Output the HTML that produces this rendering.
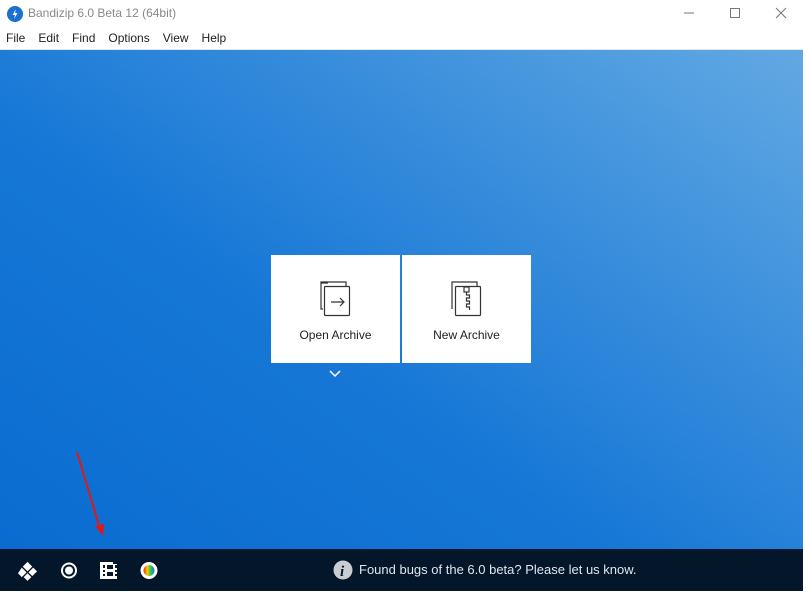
<!DOCTYPE html>
<html><head><style>
*{margin:0;padding:0;box-sizing:border-box}
body{width:806px;height:592px;background:#fff;font-family:"Segoe UI","Liberation Sans",sans-serif;position:relative;overflow:hidden}
.t{position:absolute;left:28px;top:6px;font-size:12px;color:#888}
.menu{position:absolute;left:6px;top:31px;font-size:12px;color:#222}
.menu span{margin-right:13px}
.main{position:absolute;left:0;top:49px;width:803px;height:500px;background:linear-gradient(215deg,#62a9e3 0%,#3b8fdc 30%,#1677d6 60%,#0a6cd0 100%);border-top:1px solid #e6e6e6}
.card{position:absolute;top:255px;width:129px;height:108px;background:#fff;text-align:center;font-size:12px;color:#222}
.card div{position:absolute;top:73px;width:100%}
.bar{position:absolute;left:0;top:549px;width:803px;height:42px;background:#04162a}
.msg{position:absolute;left:359px;top:562px;font-size:13px;color:#e0e6ee}
</style></head><body>
<svg style="position:absolute;left:7px;top:6px" width="16" height="16"><circle cx="8" cy="8" r="8" fill="#1a6fd1"/><path d="M9 3 L5.5 9 H8 L7 13 L10.5 7 H8z" fill="#fff"/></svg>
<div class="t">Bandizip 6.0 Beta 12 (64bit)</div>
<svg style="position:absolute;left:680px;top:6px" width="110" height="14" stroke="#777" fill="none"><path d="M4 7h10"/><rect x="50.5" y="2.5" width="9" height="9"/><path d="M96 2l10 10M106 2l-10 10"/></svg>
<div class="menu"><span>File</span><span>Edit</span><span>Find</span><span>Options</span><span>View</span><span>Help</span></div>
<div class="main"></div>
<div class="card" style="left:271px"><svg style="position:absolute;left:48px;top:24px" width="34" height="38" fill="none" stroke="#333" stroke-width="1.2"><path d="M9 4H2V30H4"/><path d="M2 4V3h25v4"/><rect x="5.5" y="7.5" width="25" height="29" rx="1"/><path d="M12 23h13M21 19l4 4-4 4"/></svg><div>Open Archive</div></div>
<div class="card" style="left:402px"><svg style="position:absolute;left:48px;top:24px" width="34" height="38" fill="none" stroke="#333" stroke-width="1.2"><path d="M2 30V3h25v4"/><rect x="5.5" y="7.5" width="25" height="29" rx="1"/><rect x="14" y="8" width="5" height="5"/><path d="M16.5 13v3h3v3h-3v3h3v3h-3v3h3v3"/></svg><div>New Archive</div></div>
<svg style="position:absolute;left:329px;top:370px" width="12" height="8" fill="none" stroke="#fff" stroke-width="1.5"><path d="M1 1l5 5 5-5"/></svg>
<svg style="position:absolute;left:75px;top:450px" width="32" height="90"><path d="M2 2L26 82" stroke="#e01818" stroke-width="2"/><path d="M20 76l8 10 1-12z" fill="#e01818"/></svg>
<div class="bar"></div>
<svg style="position:absolute;left:18px;top:560px" width="150" height="22"><g fill="#fff"><path d="M10 2l5 5-5 5-5-5z M4 8l5 5-5 5-4-4z M16 8l4 4-5 5-4-4z M10 14l4 4-4 4-4-4z" transform="scale(0.95)"/><circle cx="51" cy="10.5" r="8"/></g><circle cx="51" cy="10.5" r="6" fill="#04162a"/><circle cx="51" cy="10.5" r="4" fill="#fff"/><g fill="#fff"><rect x="82" y="2" width="17" height="17"/></g><g fill="#04162a"><rect x="85" y="5" width="2" height="3"/><rect x="85" y="10" width="2" height="2"/><rect x="85" y="14" width="2" height="2"/><rect x="89" y="5" width="6" height="4"/><rect x="89" y="12" width="6" height="4"/><rect x="97" y="5" width="2" height="3"/><rect x="97" y="10" width="2" height="2"/><rect x="97" y="14" width="2" height="2"/><rect x="95" y="2" width="4" height="2"/></g><circle cx="131" cy="10.5" r="8.5" fill="#fff"/><circle cx="131" cy="10.5" r="5.5" fill="url(#g)"/><defs><linearGradient id="g"><stop offset="0" stop-color="#e22"/><stop offset=".35" stop-color="#fc0"/><stop offset=".65" stop-color="#2c4"/><stop offset="1" stop-color="#36f"/></linearGradient></defs></svg>
<svg style="position:absolute;left:333px;top:560px" width="20" height="20"><circle cx="10" cy="10" r="9.5" fill="#c9ccd0"/><text x="7" y="16" font-family="Liberation Serif" font-style="italic" font-weight="bold" font-size="15" fill="#04162a">i</text></svg>
<div class="msg">Found bugs of the 6.0 beta? Please let us know.</div>
</body></html>
